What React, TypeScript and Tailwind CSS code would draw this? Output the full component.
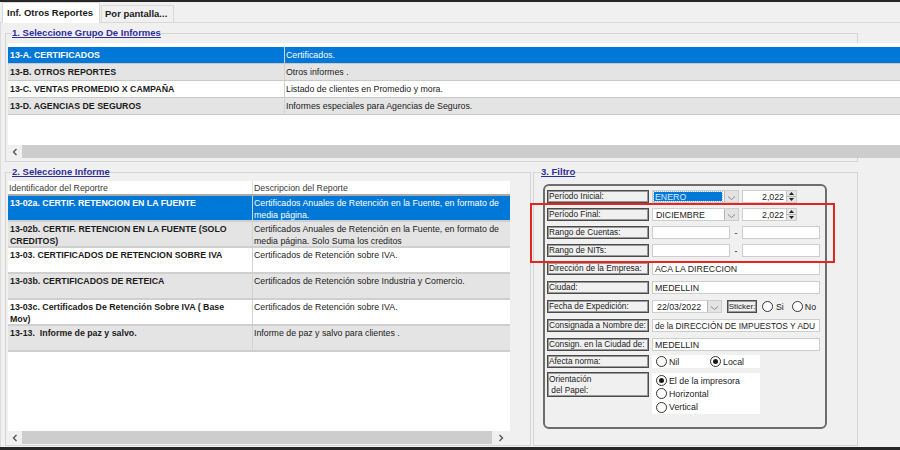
import React from "react";

const g1 = [
  { a: "13-A. CERTIFICADOS", b: "Certificados.", t: "sel" },
  { a: "13-B. OTROS REPORTES", b: "Otros informes .", t: "gray" },
  { a: "13-C. VENTAS PROMEDIO X CAMPAÑA", b: "Listado de clientes en Promedio y mora.", t: "white" },
  { a: "13-D. AGENCIAS DE SEGUROS", b: "Informes especiales para Agencias de Seguros.", t: "gray" },
];

const g2 = [
  {
    a: ["13-02a. CERTIF. RETENCION EN LA FUENTE"],
    b: ["Certificados Anuales de Retención en la Fuente, en formato de", "media página."],
    t: "sel",
  },
  {
    a: ["13-02b. CERTIF. RETENCION EN LA FUENTE (SOLO", "CREDITOS)"],
    b: ["Certificados Anuales de Retención en la Fuente, en formato de", "media página. Solo Suma los creditos"],
    t: "gray",
  },
  { a: ["13-03. CERTIFICADOS DE RETENCION SOBRE IVA"], b: ["Certificados de Retención sobre IVA."], t: "white" },
  { a: ["13-03b. CERTIFICADOS DE RETEICA"], b: ["Certificados de Retención sobre Industria y Comercio."], t: "gray" },
  { a: ["13-03c. Certificados De Retención Sobre IVA ( Base", "Mov)"], b: ["Certificados de Retención sobre IVA."], t: "white" },
  { a: ["13-13.  Informe de paz y salvo."], b: ["Informe de paz y salvo para clientes ."], t: "gray" },
];

function rowBg(t: string) {
  if (t === "sel") return "bg-[#0078d7] text-white";
  if (t === "gray") return "bg-[#e4e4e4]";
  return "bg-white";
}

function ArrowL() {
  return (
    <svg width="6" height="8" viewBox="0 0 6 8">
      <path d="M4.5 1 L1.5 4 L4.5 7" fill="none" stroke="#555" strokeWidth="1.4" />
    </svg>
  );
}
function ArrowR() {
  return (
    <svg width="6" height="8" viewBox="0 0 6 8">
      <path d="M1.5 1 L4.5 4 L1.5 7" fill="none" stroke="#555" strokeWidth="1.4" />
    </svg>
  );
}

function Chevron() {
  return (
    <svg width="9" height="6" viewBox="0 0 9 6">
      <path d="M1 1.5 L4.5 4.5 L8 1.5" fill="none" stroke="#8a8a8a" strokeWidth="1" />
    </svg>
  );
}

function Spin() {
  return (
    <div className="w-[10px] h-full flex flex-col bg-[#e6e6e6] border-l border-[#c4c4c4]">
      <div className="flex-1 flex items-center justify-center border-b border-[#b5b5b5]">
        <svg width="5" height="3" viewBox="0 0 5 3">
          <path d="M0 3 L2.5 0 L5 3 Z" fill="#222" />
        </svg>
      </div>
      <div className="flex-1 flex items-center justify-center">
        <svg width="5" height="3" viewBox="0 0 5 3">
          <path d="M0 0 L2.5 3 L5 0 Z" fill="#222" />
        </svg>
      </div>
    </div>
  );
}

function Radio({ checked }: { checked?: boolean }) {
  return (
    <span className="w-[11px] h-[11px] shrink-0 rounded-full border border-[#333] bg-white flex items-center justify-center">
      {checked && <span className="w-[5px] h-[5px] rounded-full bg-[#1a1a1a]" />}
    </span>
  );
}

function Lbl({ children }: { children: React.ReactNode }) {
  return (
    <div className="w-[102px] h-[13px] shrink-0 border border-[#4a4a4a] shadow-[inset_1px_1px_0_#9a9a9a,inset_-1px_-1px_0_#9a9a9a] pl-[1px] flex items-center whitespace-nowrap overflow-hidden text-[8.3px] leading-[11px]">
      {children}
    </div>
  );
}

function Field({ children, w }: { children?: React.ReactNode; w: string }) {
  return (
    <div className={`${w} h-[13px] shrink-0 bg-white border border-[#cdcdcd] pl-[2px] flex items-center whitespace-nowrap overflow-hidden`}>
      {children}
    </div>
  );
}

export default function App() {
  return (
    <div className="w-[900px] h-[450px] bg-[#f0f0f0] flex flex-col overflow-hidden relative text-[8.8px] leading-[12px] text-[#1b1b1b] font-['Liberation_Sans',Arial,sans-serif]">
      <div className="h-[2px] shrink-0 bg-[#262626]" />
      {/* tabs */}
      <div className="h-[21px] shrink-0 flex items-end pl-[2px] border-b border-[#d9d9d9]">
        <div className="h-[21px] w-[98px] -mb-px bg-white border border-[#d9d9d9] border-b-0 flex items-center pl-[4px] font-bold text-[9.5px] whitespace-nowrap relative z-10">
          Inf. Otros Reportes
        </div>
        <div className="h-[17px] w-[73px] ml-[1px] bg-[#f0f0f0] border border-[#d9d9d9] border-b-0 flex items-center pl-[3px] font-bold text-[9.5px] whitespace-nowrap">
          Por pantalla...
        </div>
      </div>

      {/* content */}
      <div className="h-[424px] shrink-0 flex flex-col pl-[5px] pt-[4px] border-l border-[#dcdcdc]">
        {/* group 1 */}
        <fieldset className="w-[853px] min-w-0 border border-[#d5d5d5] pl-[2px] pb-[3px] -ml-px">
          <legend className="ml-[4px] text-[9.5px] leading-[12px] font-bold text-[#2e2e9a] underline underline-offset-1">
            1. Seleccione Grupo De Informes
          </legend>
          <div className="mt-[4px] w-[892px] h-[102px] bg-white pt-[4px] flex flex-col">
            {g1.map((r) => (
              <div key={r.a} className={`h-[17px] shrink-0 flex border-b border-[#c9c9c9] ${rowBg(r.t)}`}>
                <div className="w-[277px] shrink-0 pl-[2px] font-bold flex items-center border-r border-[#d3d3d3] whitespace-nowrap">
                  {r.a}
                </div>
                <div className="pl-[1px] flex items-center whitespace-nowrap">{r.b}</div>
              </div>
            ))}
          </div>
          <div className="w-[892px] h-[13px] flex bg-[#f0f0f0]">
            <div className="w-[14px] h-full flex items-center justify-center">
              <ArrowL />
            </div>
            <div className="flex-1 h-full bg-[#cdcdcd]" />
          </div>
        </fieldset>

        {/* row 2 */}
        <div className="mt-[4px] flex">
          <fieldset className="w-[526px] h-[280px] min-w-0 border border-[#d5d5d5] pl-[2px] -ml-px">
            <legend className="ml-[4px] text-[9.5px] leading-[12px] font-bold text-[#2e2e9a] underline underline-offset-1">
              2. Seleccione Informe
            </legend>
            <div className="mt-[3px] w-[502px] h-[250px] bg-white flex flex-col">
              <div className="h-[15px] shrink-0 flex border-b-2 border-[#a9a9a9] text-[#3a3a3a]">
                <div className="w-[245px] shrink-0 pl-[1px] flex items-center border-r border-[#dedede]">
                  Identificador del Reportre
                </div>
                <div className="pl-[1px] flex items-center">Descripcion del Reporte</div>
              </div>
              {g2.map((r) => (
                <div key={r.a[0]} className={`h-[26px] shrink-0 flex border-b-2 border-[#cfcfcf] ${rowBg(r.t)}`}>
                  <div className="w-[245px] shrink-0 pl-[2px] pt-[1px] font-bold border-r border-[#d3d3d3] whitespace-pre">
                    {r.a.map((l) => (
                      <div key={l}>{l}</div>
                    ))}
                  </div>
                  <div className="pl-[1px] pt-[1px] whitespace-pre">
                    {r.b.map((l) => (
                      <div key={l}>{l}</div>
                    ))}
                  </div>
                </div>
              ))}
            </div>
            <div className="w-[502px] h-[13px] flex bg-[#f0f0f0]">
              <div className="w-[14px] h-full flex items-center justify-center">
                <ArrowL />
              </div>
              <div className="w-[470px] h-full bg-[#cdcdcd]" />
              <div className="flex-1 h-full flex items-center justify-center">
                <ArrowR />
              </div>
            </div>
          </fieldset>

          <fieldset className="ml-[2px] w-[325px] h-[280px] min-w-0 border border-[#d5d5d5]">
            <legend className="ml-[7px] text-[9.5px] leading-[12px] font-bold text-[#2e2e9a] underline underline-offset-1">
              3. Filtro
            </legend>
            <div className="mt-[6px] ml-[9px] w-[284px] h-[245px] border-2 border-[#6d6d6d] rounded-[6px] pl-[2px] pt-[4px] flex flex-col">
              {/* Período Inicial */}
              <div className="flex items-center">
                <Lbl>Período Inicial:</Lbl>
                <div className="ml-[3px] w-[87px] h-[13px] bg-white border border-[#cdcdcd] flex items-stretch">
                  <div className="ml-[1px] my-[1px] w-[68px] bg-[#0078d7] text-[#dbe9ff] pl-[1px] flex items-center outline outline-1 outline-dotted outline-[#9cc4ee]">
                    ENERO
                  </div>
                  <div className="flex-1" />
                  <div className="w-[14px] bg-[#e3e3e3] border-l border-[#b8b8b8] flex items-end justify-center pb-[1px]">
                    <Chevron />
                  </div>
                </div>
                <div className="ml-[3px] w-[55px] h-[13px] bg-white border border-[#cdcdcd] flex">
                  <div className="flex-1 flex items-center justify-end pr-[2px]">2,022</div>
                  <Spin />
                </div>
              </div>
              {/* Período Final */}
              <div className="mt-[5px] flex items-center">
                <Lbl>Período Final:</Lbl>
                <div className="ml-[3px] w-[87px] h-[13px] bg-white border border-[#cdcdcd] flex items-stretch">
                  <div className="pl-[3px] flex-1 flex items-center">DICIEMBRE</div>
                  <div className="w-[14px] bg-[#e3e3e3] border-l border-[#b8b8b8] flex items-end justify-center pb-[1px]">
                    <Chevron />
                  </div>
                </div>
                <div className="ml-[3px] w-[55px] h-[13px] bg-white border border-[#cdcdcd] flex">
                  <div className="flex-1 flex items-center justify-end pr-[2px]">2,022</div>
                  <Spin />
                </div>
              </div>
              {/* Rango de Cuentas */}
              <div className="mt-[5px] flex items-center">
                <Lbl>Rango de Cuentas:</Lbl>
                <div className="ml-[3px] flex items-center">
                  <Field w="w-[78px]" />
                  <div className="w-[12px] text-center">-</div>
                  <Field w="w-[78px]" />
                </div>
              </div>
              {/* Rango de NITs */}
              <div className="mt-[5px] flex items-center">
                <Lbl>Rango de NITs:</Lbl>
                <div className="ml-[3px] flex items-center">
                  <Field w="w-[78px]" />
                  <div className="w-[12px] text-center">-</div>
                  <Field w="w-[78px]" />
                </div>
              </div>
              {/* Dirección */}
              <div className="mt-[5px] flex items-center">
                <Lbl>Dirección de la Empresa:</Lbl>
                <div className="ml-[3px]">
                  <Field w="w-[168px]">ACA LA DIRECCION</Field>
                </div>
              </div>
              {/* Ciudad */}
              <div className="mt-[6px] flex items-center">
                <Lbl>Ciudad:</Lbl>
                <div className="ml-[3px]">
                  <Field w="w-[168px]">MEDELLIN</Field>
                </div>
              </div>
              {/* Fecha */}
              <div className="mt-[6px] flex items-center">
                <Lbl>Fecha de Expedición:</Lbl>
                <div className="ml-[3px] w-[70px] h-[13px] bg-white border border-[#cdcdcd] flex items-stretch">
                  <div className="pl-[4px] flex-1 flex items-center">22/03/2022</div>
                  <div className="w-[14px] bg-[#e3e3e3] border-l border-[#b8b8b8] flex items-end justify-center pb-[1px]">
                    <Chevron />
                  </div>
                </div>
                <div className="ml-[5px] w-[30px] h-[13px] shrink-0 border border-[#4a4a4a] shadow-[inset_1px_1px_0_#9a9a9a,inset_-1px_-1px_0_#9a9a9a] flex items-center justify-center text-[8px] whitespace-nowrap">
                  Sticker:
                </div>
                <div className="ml-[5px] flex items-center">
                  <Radio />
                  <span className="ml-[3px]">Si</span>
                </div>
                <div className="ml-[8px] flex items-center">
                  <Radio />
                  <span className="ml-[2px]">No</span>
                </div>
              </div>
              {/* Consignada */}
              <div className="mt-[6px] flex items-center">
                <Lbl>Consignada a Nombre de:</Lbl>
                <div className="ml-[3px]">
                  <Field w="w-[168px]">
                    <span className="text-[8.4px]">de la DIRECCIÓN DE IMPUESTOS Y ADU</span>
                  </Field>
                </div>
              </div>
              {/* Consign ciudad */}
              <div className="mt-[6px] flex items-center">
                <Lbl>Consign. en la Ciudad de:</Lbl>
                <div className="ml-[3px]">
                  <Field w="w-[168px]">MEDELLIN</Field>
                </div>
              </div>
              {/* Afecta norma */}
              <div className="mt-[4px] flex items-center">
                <Lbl>Afecta norma:</Lbl>
                <div className="ml-[3px] w-[108px] h-[13px] bg-white pl-[4px] flex items-center">
                  <div className="w-[54px] flex items-center">
                    <Radio />
                    <span className="ml-[2px]">Nil</span>
                  </div>
                  <Radio checked />
                  <span className="ml-[2px]">Local</span>
                </div>
              </div>
              {/* Orientación */}
              <div className="mt-[4px] flex items-start">
                <div className="w-[102px] h-[25px] shrink-0 border border-[#4a4a4a] shadow-[inset_1px_1px_0_#9a9a9a,inset_-1px_-1px_0_#9a9a9a] pl-[1px] pt-[1px] whitespace-pre text-[8.3px] leading-[11px]">
                  <div>Orientación</div>
                  <div> del Papel:</div>
                </div>
                <div className="ml-[3px] mt-[1px] w-[108px] h-[41px] bg-white pl-[4px] pt-[1px] flex flex-col">
                  <div className="h-[13.5px] flex items-center">
                    <Radio checked />
                    <span className="ml-[2px]">El de la impresora</span>
                  </div>
                  <div className="h-[13.5px] flex items-center">
                    <Radio />
                    <span className="ml-[2px]">Horizontal</span>
                  </div>
                  <div className="h-[13.5px] flex items-center">
                    <Radio />
                    <span className="ml-[2px]">Vertical</span>
                  </div>
                </div>
              </div>
            </div>
          </fieldset>
        </div>
      </div>

      <div className="h-[3px] shrink-0 bg-[#262626]" />

      {/* red annotation */}
      <div className="absolute left-[530px] top-[203px] w-[305px] h-[60px] border-2 border-[#e5251f] pointer-events-none" />
    </div>
  );
}
